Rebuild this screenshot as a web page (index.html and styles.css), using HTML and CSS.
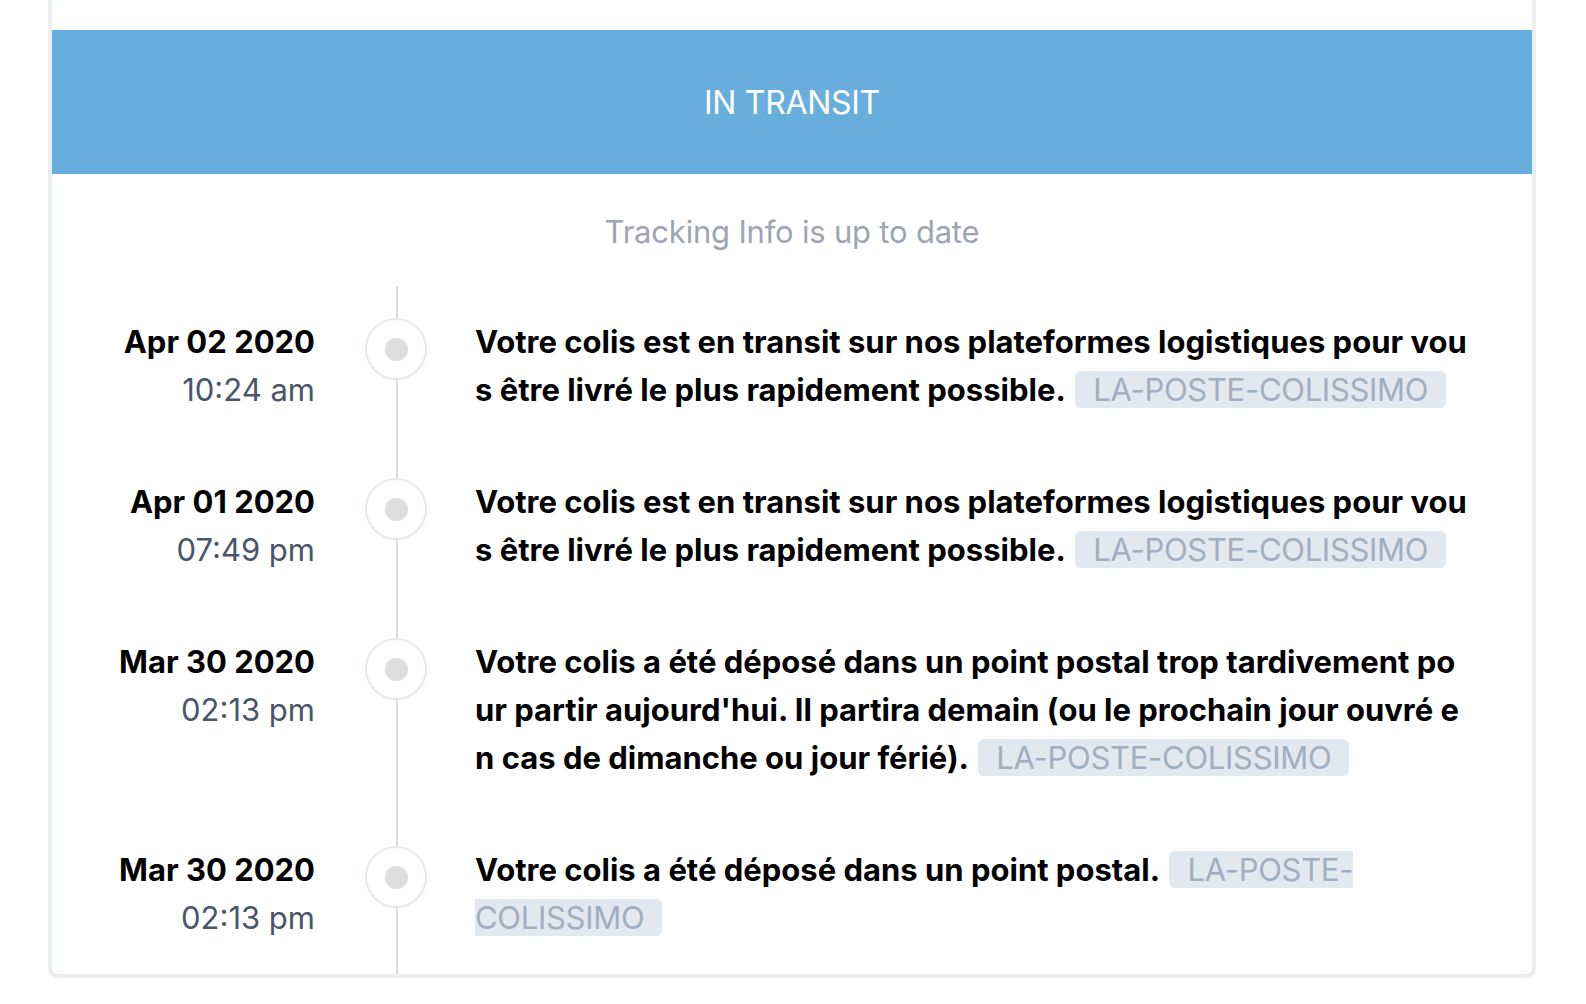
FILE: index.html
```html
<!DOCTYPE html>
<html lang="fr">
<head>
<meta charset="utf-8">
<title>Tracking</title>
<link rel="stylesheet" href="styles.css">
</head>
<body>
<div class="card">
  <div class="banner">IN TRANSIT</div>
  <p class="subtitle">Tracking Info is up to date</p>
  <ol class="timeline">
    <li class="item">
      <div class="when"><div class="date">Apr 02 2020</div><div class="time">10:24 am</div></div>
      <div class="marker"><span class="dot"></span></div>
      <div class="msg">Votre colis est en transit sur nos plateformes logistiques pour vous être livré le plus rapidement possible. <span class="tag">LA-POSTE-COLISSIMO</span></div>
    </li>
    <li class="item">
      <div class="when"><div class="date">Apr 01 2020</div><div class="time">07:49 pm</div></div>
      <div class="marker"><span class="dot"></span></div>
      <div class="msg">Votre colis est en transit sur nos plateformes logistiques pour vous être livré le plus rapidement possible. <span class="tag">LA-POSTE-COLISSIMO</span></div>
    </li>
    <li class="item">
      <div class="when"><div class="date">Mar 30 2020</div><div class="time">02:13 pm</div></div>
      <div class="marker"><span class="dot"></span></div>
      <div class="msg">Votre colis a été déposé dans un point postal trop tardivement pour partir aujourd'hui. Il partira demain (ou le prochain jour ouvré en cas de dimanche ou jour férié). <span class="tag">LA-POSTE-COLISSIMO</span></div>
    </li>
    <li class="item">
      <div class="when"><div class="date">Mar 30 2020</div><div class="time">02:13 pm</div></div>
      <div class="marker"><span class="dot"></span></div>
      <div class="msg">Votre colis a été déposé dans un point postal. <span class="tag">LA-POSTE-COLISSIMO</span></div>
    </li>
  </ol>
</div>
</body>
</html>
```
FILE: styles.css
```css
* { box-sizing: border-box; }
html, body { margin: 0; padding: 0; background: #fff; }
body {
  font-family: Inter, "Noto Sans", "Liberation Sans", sans-serif;
  color: #000;
  height: 1004px;
  overflow: hidden;
}
.card {
  margin-left: 48px;
  width: 1488px;
  padding-top: 30px;
  border: 4px solid #ebeef0;
  border-top: 0;
  border-radius: 0 0 10px 10px;
  background: #fff;
}
.banner {
  height: 144px;
  background: #67aedc;
  color: #fff;
  font-size: 32px;
  display: flex;
  align-items: center;
  justify-content: center;
  letter-spacing: -0.3px;
}
.subtitle {
  margin: 34px 0 0;
  text-align: center;
  font-size: 31px;
  line-height: 48px;
  color: #9ea5b0;
  letter-spacing: -0.2px;
}
.timeline {
  list-style: none;
  margin: 30px 0 0;
  padding: 0;
  background: linear-gradient(#dcdcdc, #dcdcdc) 344px 0 / 2px 100% no-repeat;
}
.item {
  display: flex;
  align-items: flex-start;
  padding: 32px 62px 32px 0;
  font-size: 31px;
  line-height: 48px;
}
.when {
  width: 263px;
  flex: none;
  text-align: right;
}
.date { font-weight: 700; }
.time { color: #4a5568; }
.marker {
  flex: none;
  width: 62px;
  height: 62px;
  margin: 0 48px 0 50px;
  border: 2px solid #e4e9f1;
  border-radius: 50%;
  background: #fff;
  display: flex;
  align-items: center;
  justify-content: center;
}
.dot {
  width: 23px;
  height: 23px;
  border-radius: 50%;
  background: #dedede;
}
.msg {
  flex: 1;
  font-weight: 700;
  word-break: break-all;
}
.tag {
  font-weight: 400;
  color: #a0aec0;
  background: #e2e8f0;
  border-radius: 6px;
  padding: 0 18px;
  margin-left: 3px;
  letter-spacing: -0.3px;
  word-break: normal;
}
```
